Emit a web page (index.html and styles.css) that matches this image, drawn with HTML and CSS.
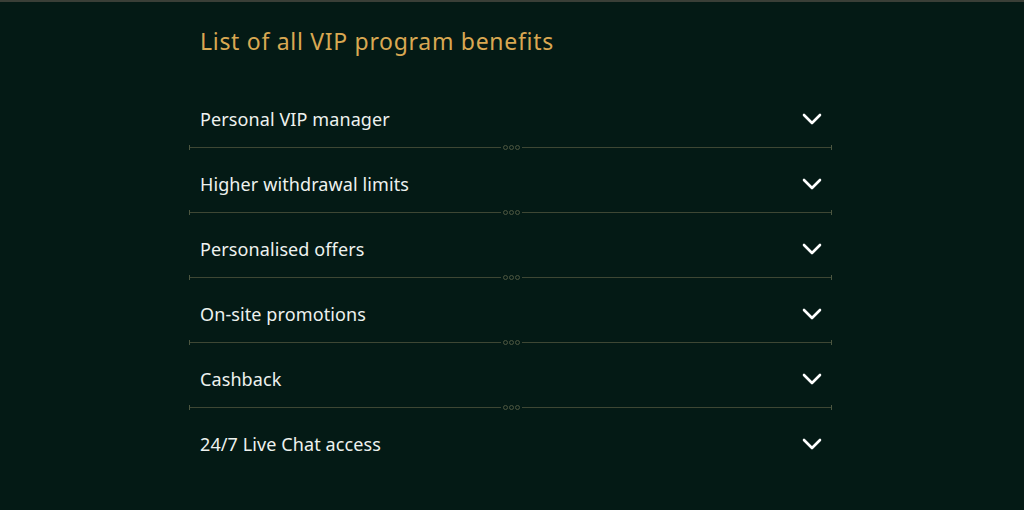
FILE: index.html
```html
<!DOCTYPE html>
<html>
<head>
    <title>VIP benefits</title>
    <link rel="stylesheet" href="styles.css">
</head>
<body>
    <div class="topline"></div>
    <section class="benefits">
        <h2 class="benefits-title">List of all VIP program benefits</h2>

        <ul class="benefit-list">
            <li class="benefit">
                <span class="benefit-name">Personal VIP manager</span>
                <svg class="chevron" viewBox="0 0 20 12"><path d="M2 2 L10 10 L18 2"/></svg>
            </li>
            <li class="divider"><span class="dots"><i></i><i></i><i></i></span></li>
            <li class="benefit">
                <span class="benefit-name">Higher withdrawal limits</span>
                <svg class="chevron" viewBox="0 0 20 12"><path d="M2 2 L10 10 L18 2"/></svg>
            </li>
            <li class="divider"><span class="dots"><i></i><i></i><i></i></span></li>
            <li class="benefit">
                <span class="benefit-name">Personalised offers</span>
                <svg class="chevron" viewBox="0 0 20 12"><path d="M2 2 L10 10 L18 2"/></svg>
            </li>
            <li class="divider"><span class="dots"><i></i><i></i><i></i></span></li>
            <li class="benefit">
                <span class="benefit-name">On-site promotions</span>
                <svg class="chevron" viewBox="0 0 20 12"><path d="M2 2 L10 10 L18 2"/></svg>
            </li>
            <li class="divider"><span class="dots"><i></i><i></i><i></i></span></li>
            <li class="benefit">
                <span class="benefit-name">Cashback</span>
                <svg class="chevron" viewBox="0 0 20 12"><path d="M2 2 L10 10 L18 2"/></svg>
            </li>
            <li class="divider"><span class="dots"><i></i><i></i><i></i></span></li>
            <li class="benefit">
                <span class="benefit-name">24/7 Live Chat access</span>
                <svg class="chevron" viewBox="0 0 20 12"><path d="M2 2 L10 10 L18 2"/></svg>
            </li>
        </ul>
    </section>
</body>
</html>
```

FILE: styles.css
```css
body {
    margin: 0;
    height: 510px;
    background-color: #041a15;
    font-family: "Noto Sans", "Lato", sans-serif;
    color: #eef2ef;
    overflow: hidden;
}

.topline {
    height: 2px;
    background-color: #3a3f37;
}

.benefits {
    width: 643px;
    margin: 0 0 0 189px;
}

.benefits-title {
    margin: 0;
    padding: 23px 0 0 11px;
    height: 81px;
    box-sizing: border-box;
    font-size: 23px;
    line-height: 32px;
    font-weight: 400;
    color: #d9a852;
    letter-spacing: 0.7px;
}

.benefit-list {
    list-style: none;
    margin: 0;
    padding: 0;
}

.benefit {
    display: flex;
    align-items: center;
    justify-content: space-between;
    height: 64px;
    padding: 7px 10px 0 11px;
    box-sizing: border-box;
}

.benefit-name {
    font-size: 18px;
    letter-spacing: 0.1px;
}

.chevron {
    width: 20px;
    height: 12px;
    fill: none;
    stroke: #ffffff;
    stroke-width: 2.6;
    stroke-linecap: round;
    stroke-linejoin: round;
}

.divider {
    position: relative;
    height: 1px;
    background-color: #3e4734;
    display: flex;
    justify-content: center;
    align-items: center;
}

.divider::before,
.divider::after {
    content: "";
    position: absolute;
    top: -2px;
    width: 1px;
    height: 5px;
    background-color: #4c5640;
}

.divider::before { left: 0; }
.divider::after { right: 0; }

.dots {
    display: flex;
    gap: 1px;
    padding: 0 2px;
    background-color: #041a15;
    margin-left: 2px;
}

.dots i {
    width: 3px;
    height: 3px;
    border: 1px solid #4c5640;
    border-radius: 50%;
}
```
